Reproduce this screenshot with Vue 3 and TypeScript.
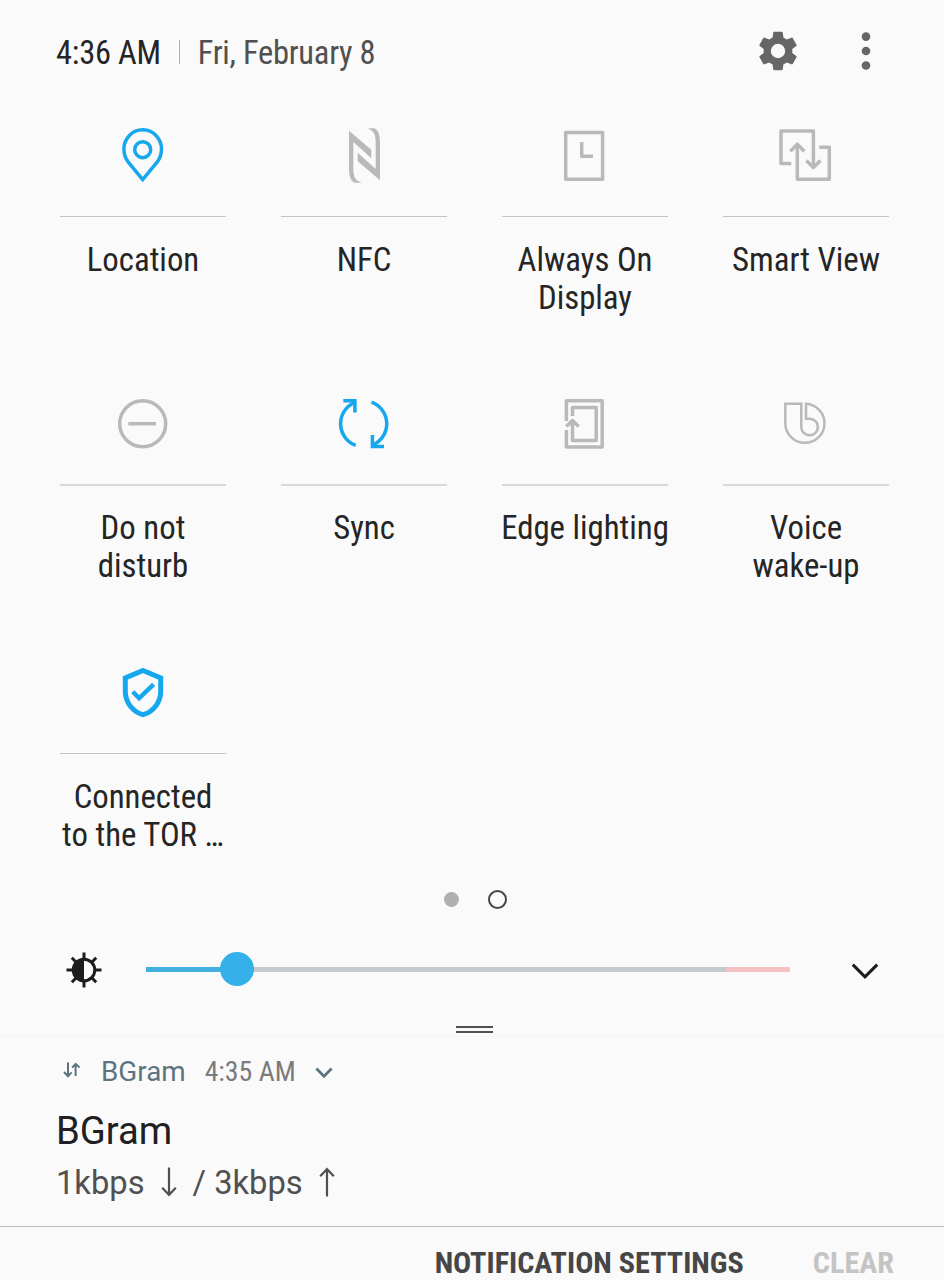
<template>
  <div class="panel">
    <header class="top-bar">
      <span class="clock">4:36 AM</span>
      <span class="separator"></span>
      <span class="date">Fri, February 8</span>
      <div class="actions">
        <svg class="gear" viewBox="0 0 24 24">
          <path
            fill-rule="evenodd"
            d="M19.43 12.98c.04-.32.07-.64.07-.98s-.03-.66-.07-.98l2.11-1.65c.19-.15.24-.42.12-.64l-2-3.46c-.12-.22-.39-.3-.61-.22l-2.49 1c-.52-.4-1.08-.73-1.69-.98l-.38-2.65C14.46 2.18 14.25 2 14 2h-4c-.25 0-.46.18-.49.42l-.38 2.65c-.61.25-1.17.59-1.69.98l-2.49-1c-.23-.09-.49 0-.61.22l-2 3.46c-.13.22-.07.49.12.64l2.11 1.65c-.04.32-.07.65-.07.98s.03.66.07.98l-2.11 1.65c-.19.15-.24.42-.12.64l2 3.46c.12.22.39.3.61.22l2.49-1c.52.4 1.08.73 1.69.98l.38 2.65c.03.24.24.42.49.42h4c.25 0 .46-.18.49-.42l.38-2.65c.61-.25 1.17-.59 1.69-.98l2.49 1c.23.09.49 0 .61-.22l2-3.46c.12-.22.07-.49-.12-.64l-2.11-1.65zM12 15.75a3.75 3.75 0 1 1 0-7.5a3.75 3.75 0 0 1 0 7.5z"
          />
        </svg>
        <svg class="more" viewBox="0 0 10 48">
          <circle cx="5" cy="9.6" r="4.3" />
          <circle cx="5" cy="24" r="4.3" />
          <circle cx="5" cy="38.5" r="4.3" />
        </svg>
      </div>
    </header>

    <section class="tiles">
      <button
        v-for="tile in tiles"
        :key="tile.id"
        class="tile"
        :class="{ active: tile.active }"
        @click="toggle(tile)"
      >
        <svg class="tile-icon" :class="tile.id" viewBox="0 0 64 64">
          <path
            v-for="(shape, i) in tile.shapes"
            :key="i"
            :d="shape"
          />
        </svg>
        <span class="tile-line"></span>
        <span class="tile-label">
          <span v-for="line in tile.label" :key="line">{{ line }}</span>
        </span>
      </button>
    </section>

    <div class="pager">
      <span class="dot"></span>
      <span class="dot current"></span>
    </div>

    <div class="brightness">
      <svg class="sun" viewBox="0 0 36 36">
        <path class="rays" d="M18 .5V8M18 28V35.5M.5 18H8M28 18H35.5M5.8 5.8L10 10M26 26L30.2 30.2M30.2 5.8L26 10M10 26L5.8 30.2" />
        <circle class="ring" cx="18" cy="18" r="10.8" />
        <path class="half" d="M18 6.5a11.5 11.5 0 0 0 0 23z" />
      </svg>
      <div class="slider">
        <div class="fill" :style="{ width: brightness + '%' }"></div>
        <div class="warn"></div>
        <div class="knob" :style="{ left: brightness + '%' }"></div>
      </div>
      <svg class="expand" viewBox="0 0 28 18">
        <path d="M1.8 2.6L14 14.8L26.2 2.6" />
      </svg>
    </div>

    <div class="handle"></div>

    <article class="notification">
      <div class="note-head">
        <svg class="transfer" viewBox="0 0 18 16">
          <path d="M5 .5V14M1 10L5 14.2L8.6 10.4M12.6 14V2M9.2 5.6L12.6 1.8L16.6 5.4" />
        </svg>
        <span class="app-name">BGram</span>
        <span class="note-time">4:35 AM</span>
        <svg class="note-chevron" viewBox="0 0 18 12">
          <path d="M1.4 1.6L9 9.2L16.6 1.6" />
        </svg>
      </div>
      <h1 class="note-title">BGram</h1>
      <p class="note-text">
        <span>1kbps</span>
        <svg class="arrow down" viewBox="0 0 16 30">
          <path d="M8 .5V28M1.2 20.8L8 27.8L14.8 20.8" />
        </svg>
        <span class="up-rate">/ 3kbps</span>
        <svg class="arrow up" viewBox="0 0 16 30">
          <path d="M8 29.5V2M1.2 9.2L8 2.2L14.8 9.2" />
        </svg>
      </p>
    </article>

    <footer class="footer">
      <span class="settings-link">NOTIFICATION SETTINGS</span>
      <span class="clear-link">CLEAR</span>
    </footer>
  </div>
</template>

<script setup lang="ts">
import { ref } from "vue";

interface Tile {
  id: string;
  label: string[];
  active: boolean;
  shapes: string[];
}

const brightness = ref(14.1);

const tiles = ref<Tile[]>([
  {
    id: "location",
    label: ["Location"],
    active: true,
    shapes: [
      "M31.7 56.6L17.3 39.2C14.3 35.2 12.9 30.5 12.9 26A18.8 19.2 0 0 1 50.5 26C50.5 30.5 49.1 35.2 46.1 39.2Z",
      "M23.7 26.7a8 8 0 1 0 16 0a8 8 0 1 0-16 0z",
    ],
  },
  {
    id: "nfc",
    label: ["NFC"],
    active: false,
    shapes: [
      "M17 7.7L39.3 26.8V35.3L21.3 19V46C21.3 54 24 58.5 29.7 59.3C27 60 24 60 22 59.5C18.5 57.5 17 52 17 46Z",
      "M48 57.3L25.7 38.2V29.7L43.7 46V19C43.7 11 41 6.5 35.3 5.7C38 5 41 5 43 5.5C46.5 7.5 48 13 48 19Z",
    ],
  },
  {
    id: "always-on",
    label: ["Always On", "Display"],
    active: false,
    shapes: ["M12.7 9.4H49.6V56.3H12.7Z", "M28.7 19V33.3H40"],
  },
  {
    id: "smart-view",
    label: ["Smart View"],
    active: false,
    shapes: [
      "M17.3 40.4H7V8H39.4V44",
      "M32.4 37.4L39.4 44.4L46.4 37.4",
      "M45.3 24.2H55.3V56.3H23.3V21.5",
      "M16.3 28.2L23.3 21.2L30.3 28.2",
    ],
  },
  {
    id: "dnd",
    label: ["Do not", "disturb"],
    active: false,
    shapes: ["M8.7 32.7a23 23 0 1 0 46 0a23 23 0 1 0-46 0z", "M17.3 32.7H45"],
  },
  {
    id: "sync",
    label: ["Sync"],
    active: true,
    shapes: [
      "M23.7 54.3A23 23 0 0 1 22.4 11.6",
      "M11.3 9.8H22.9V21.4",
      "M39.5 11.1A23 23 0 0 1 41 53.8",
      "M52 55.6H40.4V44",
    ],
  },
  {
    id: "edge",
    label: ["Edge lighting"],
    active: false,
    shapes: [
      "M13.4 30V9.8H49.2V55.9H13.4V39",
      "M19.5 25V16.5H43.2V49.5H19.5V30",
      "M13.3 35.6L19.5 29.6L25.7 35.6",
    ],
  },
  {
    id: "voice",
    label: ["Voice", "wake-up"],
    active: false,
    shapes: [
      "M11.3 12.7H27.3V36A8.3 8.3 0 1 0 35.6 27.7H32V12.7A19.6 19.6 0 1 1 11.3 32.5Z",
    ],
  },
  {
    id: "shield",
    label: ["Connected", "to the TOR …"],
    active: true,
    shapes: [
      "M32 10.5L49.7 18V31.5C49.7 42.5 42 52 32 54.6C22 52 14.3 42.5 14.3 31.5V18Z",
      "M21.7 31.7L28.2 38.2L42.6 24.4",
    ],
  },
]);

const toggle = (tile: Tile) => {
  tile.active = !tile.active;
};
</script>

<style>
body {
  background: #fafafa;
}
</style>

<style scoped>
.panel {
  width: 944px;
  height: 1280px;
  overflow: hidden;
  display: flex;
  flex-direction: column;
  background: #fafafa;
  color: #252525;
  font-family: "Roboto Condensed", Roboto, sans-serif;
  font-stretch: 75%;
}

svg {
  display: block;
  flex: none;
  fill: none;
}

.top-bar {
  height: 104px;
  flex: none;
  box-sizing: border-box;
  padding: 0 73px 0 56px;
  display: flex;
  align-items: center;
  font-size: 32.5px;
  letter-spacing: -0.25px;
  white-space: nowrap;
}

.clock,
.date {
  padding-top: 2px;
}

.separator {
  width: 1px;
  height: 24px;
  margin: 0 18px;
  background: #b0b0b0;
}

.date {
  color: #505050;
}

.actions {
  margin-left: auto;
  display: flex;
  align-items: center;
  gap: 60px;
  padding-bottom: 2px;
}

.gear {
  width: 46px;
  height: 48px;
  fill: #666;
}

.more {
  width: 10px;
  height: 48px;
  fill: #666;
}

.tiles {
  flex: none;
  display: grid;
  grid-template-columns: repeat(4, 166px);
  grid-template-rows: 268px 269px 226px;
  column-gap: 55px;
  padding: 19px 0 0 60px;
}

.tile {
  display: flex;
  flex-direction: column;
  align-items: center;
  justify-content: flex-start;
  padding: 0;
  border: none;
  background: none;
  font: inherit;
  color: inherit;
  cursor: pointer;
}

.tile-icon {
  width: 64px;
  height: 64px;
  stroke: #b9b9b9;
  stroke-width: 3.5;
}

.tile.active .tile-icon {
  stroke: #16a8ee;
}

.tile-icon.nfc {
  fill: #b9b9b9;
  stroke: none;
}

.tile-icon.always-on,
.tile-icon.smart-view,
.tile-icon.edge {
  stroke-linejoin: round;
}

.tile-icon.voice {
  stroke-width: 2.5;
}

.tile-icon.shield {
  stroke-width: 5;
}

.tile-icon.shield path + path {
  stroke-width: 4.4;
}

.tile-line {
  width: 166px;
  height: 1px;
  margin-top: 29px;
  background: #c4c4c4;
}

.tile:nth-child(n + 5):nth-child(-n + 8) .tile-line {
  height: 2px;
  margin-bottom: -1px;
  background: #d8d8d8;
}

.tile-label {
  margin-top: 24px;
  display: flex;
  flex-direction: column;
  align-items: center;
  font-size: 32.8px;
  line-height: 38px;
  white-space: nowrap;
}

.pager {
  height: 20px;
  flex: none;
  margin-top: 3px;
  padding-left: 7px;
  display: flex;
  align-items: center;
  justify-content: center;
  gap: 29px;
}

.dot {
  width: 15px;
  height: 15px;
  border-radius: 50%;
  background: #b0b0b0;
}

.dot.current {
  border: 2px solid #454545;
  background: none;
}

.brightness {
  height: 40px;
  flex: none;
  margin-top: 40px;
  padding: 0 65px 0 66px;
  display: flex;
  align-items: center;
}

.sun {
  width: 36px;
  height: 36px;
  margin-top: 2px;
}

.rays {
  stroke: #1c1c1c;
  stroke-width: 3;
}

.ring {
  fill: #fafafa;
  stroke: #1c1c1c;
  stroke-width: 3;
}

.half {
  fill: #1c1c1c;
}

.slider {
  position: relative;
  width: 644px;
  height: 5px;
  margin-left: 44px;
  display: flex;
  justify-content: space-between;
  background: #c1cacc;
}

.fill {
  background: #41b0e0;
}

.warn {
  width: 64px;
  background: #f5c1c1;
}

.knob {
  position: absolute;
  top: 50%;
  width: 34px;
  height: 34px;
  border-radius: 50%;
  background: #35b0e8;
  transform: translate(-50%, -50%);
}

.expand {
  width: 28px;
  height: 18px;
  margin: 4px 0 0 auto;
  stroke: #1c1c1c;
  stroke-width: 3;
}

.handle {
  width: 37px;
  height: 3px;
  flex: none;
  margin: 37px 0 0 456px;
  border-top: 2px solid #505050;
  border-bottom: 2px solid #505050;
}

.notification {
  flex: none;
  height: 190px;
  box-sizing: border-box;
  margin-top: 3px;
  padding: 14px 56px 0;
  border-top: 1px solid #f5f5f5;
  font-family: Roboto, sans-serif;
  font-stretch: 100%;
}

.note-head {
  display: flex;
  align-items: center;
  height: 40px;
  padding-left: 7px;
  font-size: 27.8px;
  color: #5d7480;
}

.transfer {
  width: 18px;
  height: 16px;
  margin-bottom: 3px;
  stroke: #5d7480;
  stroke-width: 2;
}

.app-name {
  margin-left: 20px;
}

.note-time {
  margin-left: 19px;
  font-family: "Roboto Condensed", Roboto, sans-serif;
  font-stretch: 75%;
  color: #7b7b7b;
}

.note-chevron {
  width: 18px;
  height: 12px;
  margin: 3px 0 0 19px;
  stroke: #5d7480;
  stroke-width: 2.8;
}

.note-title {
  margin: 16px 0 0;
  font-size: 38.2px;
  font-weight: 400;
  line-height: 48px;
  color: #202020;
}

.note-text {
  margin: 8px 0 0;
  display: flex;
  align-items: center;
  font-size: 32.7px;
  line-height: 40px;
  color: #505050;
}

.arrow {
  width: 16px;
  height: 30px;
  margin-left: 16px;
  margin-bottom: 2px;
  stroke: #505050;
  stroke-width: 2.2;
}

.up-rate {
  margin-left: 16px;
}

.footer {
  flex: 1;
  border-top: 1px solid #b8bcbc;
  padding: 18px 50px 0 0;
  display: flex;
  align-items: flex-start;
  justify-content: flex-end;
  gap: 69px;
  font-size: 30.2px;
  font-weight: 700;
  line-height: 35px;
  white-space: nowrap;
  color: #464646;
}

.clear-link {
  color: #c4c4c4;
}
</style>
